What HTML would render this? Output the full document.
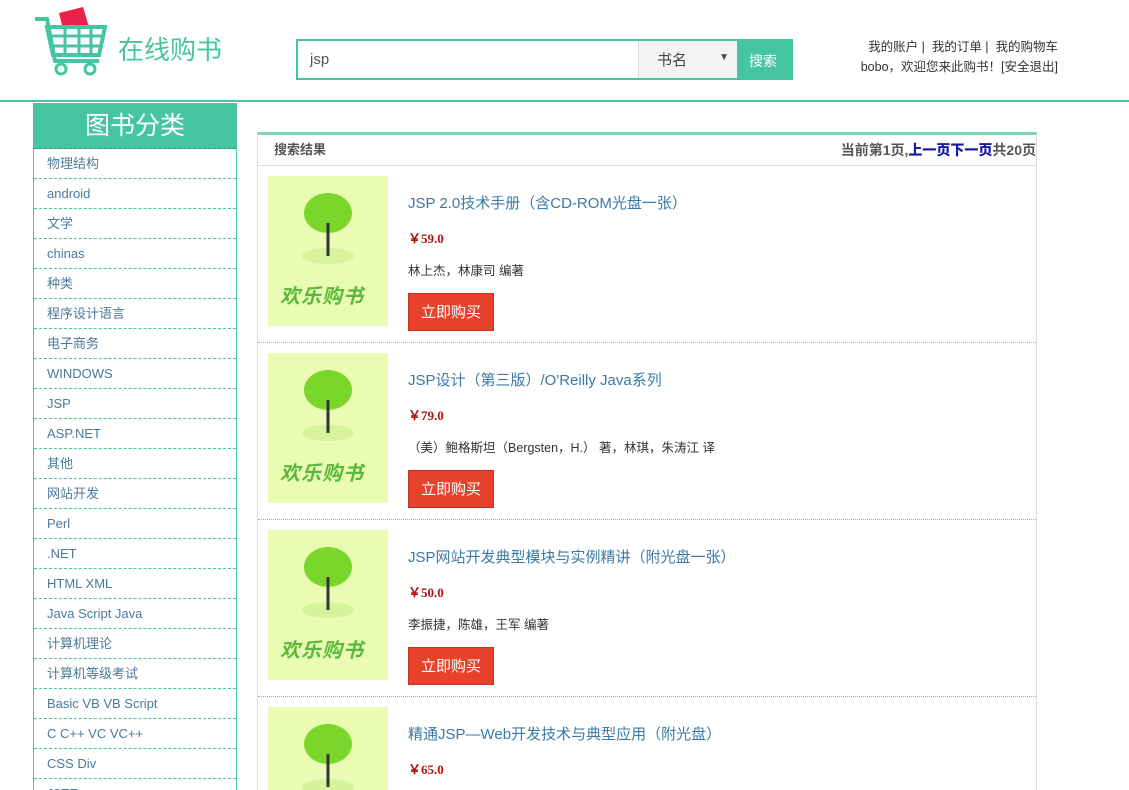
<!DOCTYPE html><html><head><meta charset="utf-8"><style>
*{margin:0;padding:0;box-sizing:border-box}
html,body{width:1129px;height:790px;overflow:hidden}
body{background:#fff;font-family:"Liberation Sans","Noto Sans CJK SC",sans-serif;font-size:13px;color:#333;position:relative}
.a{position:absolute}
.hr{left:0;top:100px;width:1129px;height:2px;background:#45c6a0}
.logo{left:118px;top:30px;font-size:26px;color:#45c6a0}
.search{left:296px;top:39px;width:497px;height:41px;border:2px solid #45c6a0;background:#fff}
.search .in{left:12px;top:10px;font-size:15px;color:#555}
.search .sel{left:340px;top:0;width:99px;height:37px;background:#f3f3f3;border-left:1px solid #ddd;font-size:15px;color:#444;padding:8px 0 0 18px}
.search .btn{left:439px;top:0;width:56px;height:37px;background:#45c6a0;color:#fff;font-size:14px;padding:10px 0 0 12px}
.top{right:71px;top:37px;text-align:right;font-size:12.5px;line-height:20px;color:#333}
.side{left:33px;top:103px;width:204px;height:687px;overflow:hidden;border-left:1px solid #45c6a0;border-right:1px solid #45c6a0}
.side h2{height:46px;background:#45c6a0;color:#fff;font-weight:normal;font-size:25px;text-align:center;line-height:46px;border-bottom:1px dashed #2a9a7a}
.side div{height:30px;line-height:30px;padding-left:13px;border-bottom:1px dashed #45c6a0;color:#4a7a9a;font-size:13px}
.main{left:257px;top:132px;width:780px;height:658px;overflow:hidden;border:1px solid #ddd;border-top:3px solid #7fd4bd;border-bottom:none}
.mh{height:31px;border-bottom:1px solid #ddd;line-height:30px;font-weight:bold;color:#555;font-size:13px;padding-left:16px;position:relative}
.mh span{position:absolute;right:0;top:0;font-size:14px;color:#555}
.mh b{color:#1a1aa0}
.it{height:177px;border-bottom:1px dotted #aaa;position:relative}
.img{left:10px;top:10px;width:120px;height:150px;background:#eafcb3}
.t{left:150px;top:26px;font-size:15px;color:#3a7aa5}
.p{left:150px;top:62px;font-size:13px;color:#b01010;font-weight:bold;font-family:"Liberation Serif",serif}
.au{left:150px;top:94px;font-size:12.5px;color:#333}
.bt{left:150px;top:127px;width:86px;height:38px;background:#e8432a;color:#fff;font-size:15px;text-align:center;line-height:38px;border:1px solid #c03020}
.hz{left:12px;top:104px;font-size:20px;color:#5ab83a;font-style:italic;font-weight:bold;letter-spacing:1px}
</style></head><body>
<svg class="a" style="left:33px;top:5px" width="80" height="72" viewBox="0 0 80 72">
<polygon points="26,8 50,2 56,22 30,24" fill="#e8244a"/>
<path d="M2 14 H14 L22 56 H66" fill="none" stroke="#45c6a0" stroke-width="4"/>
<path d="M14 22 H72 L66 50 H20 Z" fill="none" stroke="#45c6a0" stroke-width="4"/>
<path d="M16 31 H70 M18 41 H68 M32 22 V50 M46 22 V50 M58 22 V50" stroke="#45c6a0" stroke-width="3"/>
<circle cx="28" cy="64" r="5" fill="none" stroke="#45c6a0" stroke-width="3"/><circle cx="57" cy="64" r="5" fill="none" stroke="#45c6a0" stroke-width="3"/>
</svg>
<div class="a logo">在线购书</div>
<div class="a search"><div class="a in">jsp</div><div class="a sel">书名<span style="position:absolute;right:8px;top:11px;font-size:10px">▼</span></div><div class="a btn">搜索</div></div>
<div class="a top">我的账户 |&nbsp; 我的订单 |&nbsp; 我的购物车<br>bobo，欢迎您来此购书！[安全退出]</div>
<div class="a hr"></div>
<div class="a side"><h2>图书分类</h2>
<div>物理结构</div><div>android</div><div>文学</div><div>chinas</div><div>种类</div><div>程序设计语言</div><div>电子商务</div><div>WINDOWS</div><div>JSP</div><div>ASP.NET</div><div>其他</div><div>网站开发</div><div>Perl</div><div>.NET</div><div>HTML XML</div><div>Java Script Java</div><div>计算机理论</div><div>计算机等级考试</div><div>Basic VB VB Script</div><div>C C++ VC VC++</div><div>CSS Div</div><div>J2EE</div></div>
<div class="a main"><div class="mh">搜索结果<span>当前第1页,<b>上一页下一页</b>共20页</span></div>
<div class="it"><div class="a img"><svg class="a" style="left:30px;top:12px" width="60" height="80"><ellipse cx="30" cy="25" rx="24" ry="20" fill="#7ad62a"/><ellipse cx="30" cy="68" rx="26" ry="8" fill="#d6f29a"/><path d="M30 35 V68" stroke="#333" stroke-width="3"/></svg><div class="a hz">欢乐购书</div></div><div class="a t">JSP 2.0技术手册（含CD-ROM光盘一张）</div><div class="a p">￥59.0</div><div class="a au">林上杰，林康司 编著</div><div class="a bt">立即购买</div></div>
<div class="it"><div class="a img"><svg class="a" style="left:30px;top:12px" width="60" height="80"><ellipse cx="30" cy="25" rx="24" ry="20" fill="#7ad62a"/><ellipse cx="30" cy="68" rx="26" ry="8" fill="#d6f29a"/><path d="M30 35 V68" stroke="#333" stroke-width="3"/></svg><div class="a hz">欢乐购书</div></div><div class="a t">JSP设计（第三版）/O'Reilly Java系列</div><div class="a p">￥79.0</div><div class="a au">（美）鲍格斯坦（Bergsten，H.） 著，林琪，朱涛江 译</div><div class="a bt">立即购买</div></div>
<div class="it"><div class="a img"><svg class="a" style="left:30px;top:12px" width="60" height="80"><ellipse cx="30" cy="25" rx="24" ry="20" fill="#7ad62a"/><ellipse cx="30" cy="68" rx="26" ry="8" fill="#d6f29a"/><path d="M30 35 V68" stroke="#333" stroke-width="3"/></svg><div class="a hz">欢乐购书</div></div><div class="a t">JSP网站开发典型模块与实例精讲（附光盘一张）</div><div class="a p">￥50.0</div><div class="a au">李振捷，陈雄，王军 编著</div><div class="a bt">立即购买</div></div>
<div class="it"><div class="a img"><svg class="a" style="left:30px;top:12px" width="60" height="80"><ellipse cx="30" cy="25" rx="24" ry="20" fill="#7ad62a"/><ellipse cx="30" cy="68" rx="26" ry="8" fill="#d6f29a"/><path d="M30 35 V68" stroke="#333" stroke-width="3"/></svg></div><div class="a t">精通JSP—Web开发技术与典型应用（附光盘）</div><div class="a p">￥65.0</div></div>
</div>
</body></html>
